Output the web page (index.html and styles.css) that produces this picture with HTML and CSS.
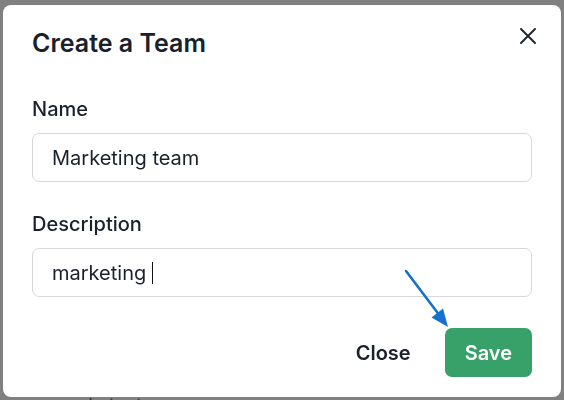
FILE: index.html
```html
<!DOCTYPE html>
<html lang="en">
<head>
<meta charset="utf-8">
<title>Create a Team</title>
<link rel="stylesheet" href="styles.css">
</head>
<body>
<div class="page">
  <p class="behind">nla test</p>
</div>
<div class="overlay">
  <section class="modal">
    <header class="modal-header">
      <h2 class="modal-title">Create a Team</h2>
      <button class="close-x" aria-label="Close">
        <svg width="16" height="16" viewBox="0 0 16 16"><path d="M1 1 L15 15 M15 1 L1 15" stroke="#1f2430" stroke-width="1.9" fill="none" stroke-linecap="round"/></svg>
      </button>
    </header>
    <div class="modal-body">
      <div class="field">
        <label class="label">Name</label>
        <div class="input">Marketing team</div>
      </div>
      <div class="field">
        <label class="label">Description</label>
        <div class="input">marketing<span class="caret"></span></div>
      </div>
    </div>
    <footer class="modal-footer">
      <button class="btn btn-ghost">Close</button>
      <button class="btn btn-save">Save</button>
    </footer>
  </section>
  <svg class="arrow" width="564" height="400" viewBox="0 0 564 400">
    <line x1="406" y1="271" x2="440" y2="316" stroke="#1670d0" stroke-width="2.6" stroke-linecap="round"/>
    <polygon points="448,327 431.5,317.5 443,308.5" fill="#1670d0"/>
  </svg>
</div>
</body>
</html>
```

FILE: styles.css
```css
* { box-sizing: border-box; }
html, body {
  margin: 0;
  height: 400px;
  overflow: hidden;
}
body {
  background: #808080;
  font-family: Inter, "Noto Sans", "DejaVu Sans", sans-serif;
  color: #1a202c;
}
.page {
  padding: 392px 0 0 77px;
}
.behind {
  margin: 0;
  font-size: 19px;
  line-height: 28px;
  color: #3a3a3a;
}
.overlay {
  position: fixed;
  inset: 0;
  padding: 5px 3px 3px 3px;
}
.modal {
  background: #fff;
  border-radius: 8px;
  height: 392px;
  display: flex;
  flex-direction: column;
}
.modal-header {
  display: flex;
  justify-content: space-between;
  align-items: flex-start;
  padding: 20px 29px 18px 29px;
}
.modal-title {
  margin: 0;
  font-size: 25px;
  line-height: 36px;
  font-weight: 600;
  color: #1a202c;
}
.close-x {
  width: 38px;
  height: 38px;
  margin: -8.5px -14.5px 0 0;
  padding: 0;
  border: 0;
  background: transparent;
  display: flex;
  align-items: center;
  justify-content: center;
}
.modal-body {
  padding: 16px 29px 0 29px;
  display: flex;
  flex-direction: column;
  gap: 28px;
}
.field {
  display: flex;
  flex-direction: column;
}
.label {
  font-size: 20px;
  line-height: 28px;
  font-weight: 500;
  margin-bottom: 10px;
  color: #1a202c;
}
.input {
  height: 49px;
  border: 1px solid #d4d7dc;
  border-radius: 7px;
  padding: 0 19px;
  display: flex;
  align-items: center;
  font-size: 20px;
  color: #1a202c;
}
.caret {
  display: inline-block;
  width: 1px;
  height: 22px;
  background: #111;
  margin-left: 6px;
}
.modal-footer {
  margin-top: auto;
  display: flex;
  justify-content: flex-end;
  padding: 0 29px 20px 29px;
}
.btn {
  height: 49px;
  border: 0;
  border-radius: 7px;
  font-family: inherit;
  font-size: 20px;
  font-weight: 600;
  padding: 0 19px;
}
.btn-ghost {
  background: transparent;
  color: #1a202c;
  margin-right: 15px;
}
.btn-save {
  background: #38a169;
  color: #fff;
  padding: 0 20px;
}
.arrow {
  position: absolute;
  left: 0;
  top: 0;
  pointer-events: none;
}
```
